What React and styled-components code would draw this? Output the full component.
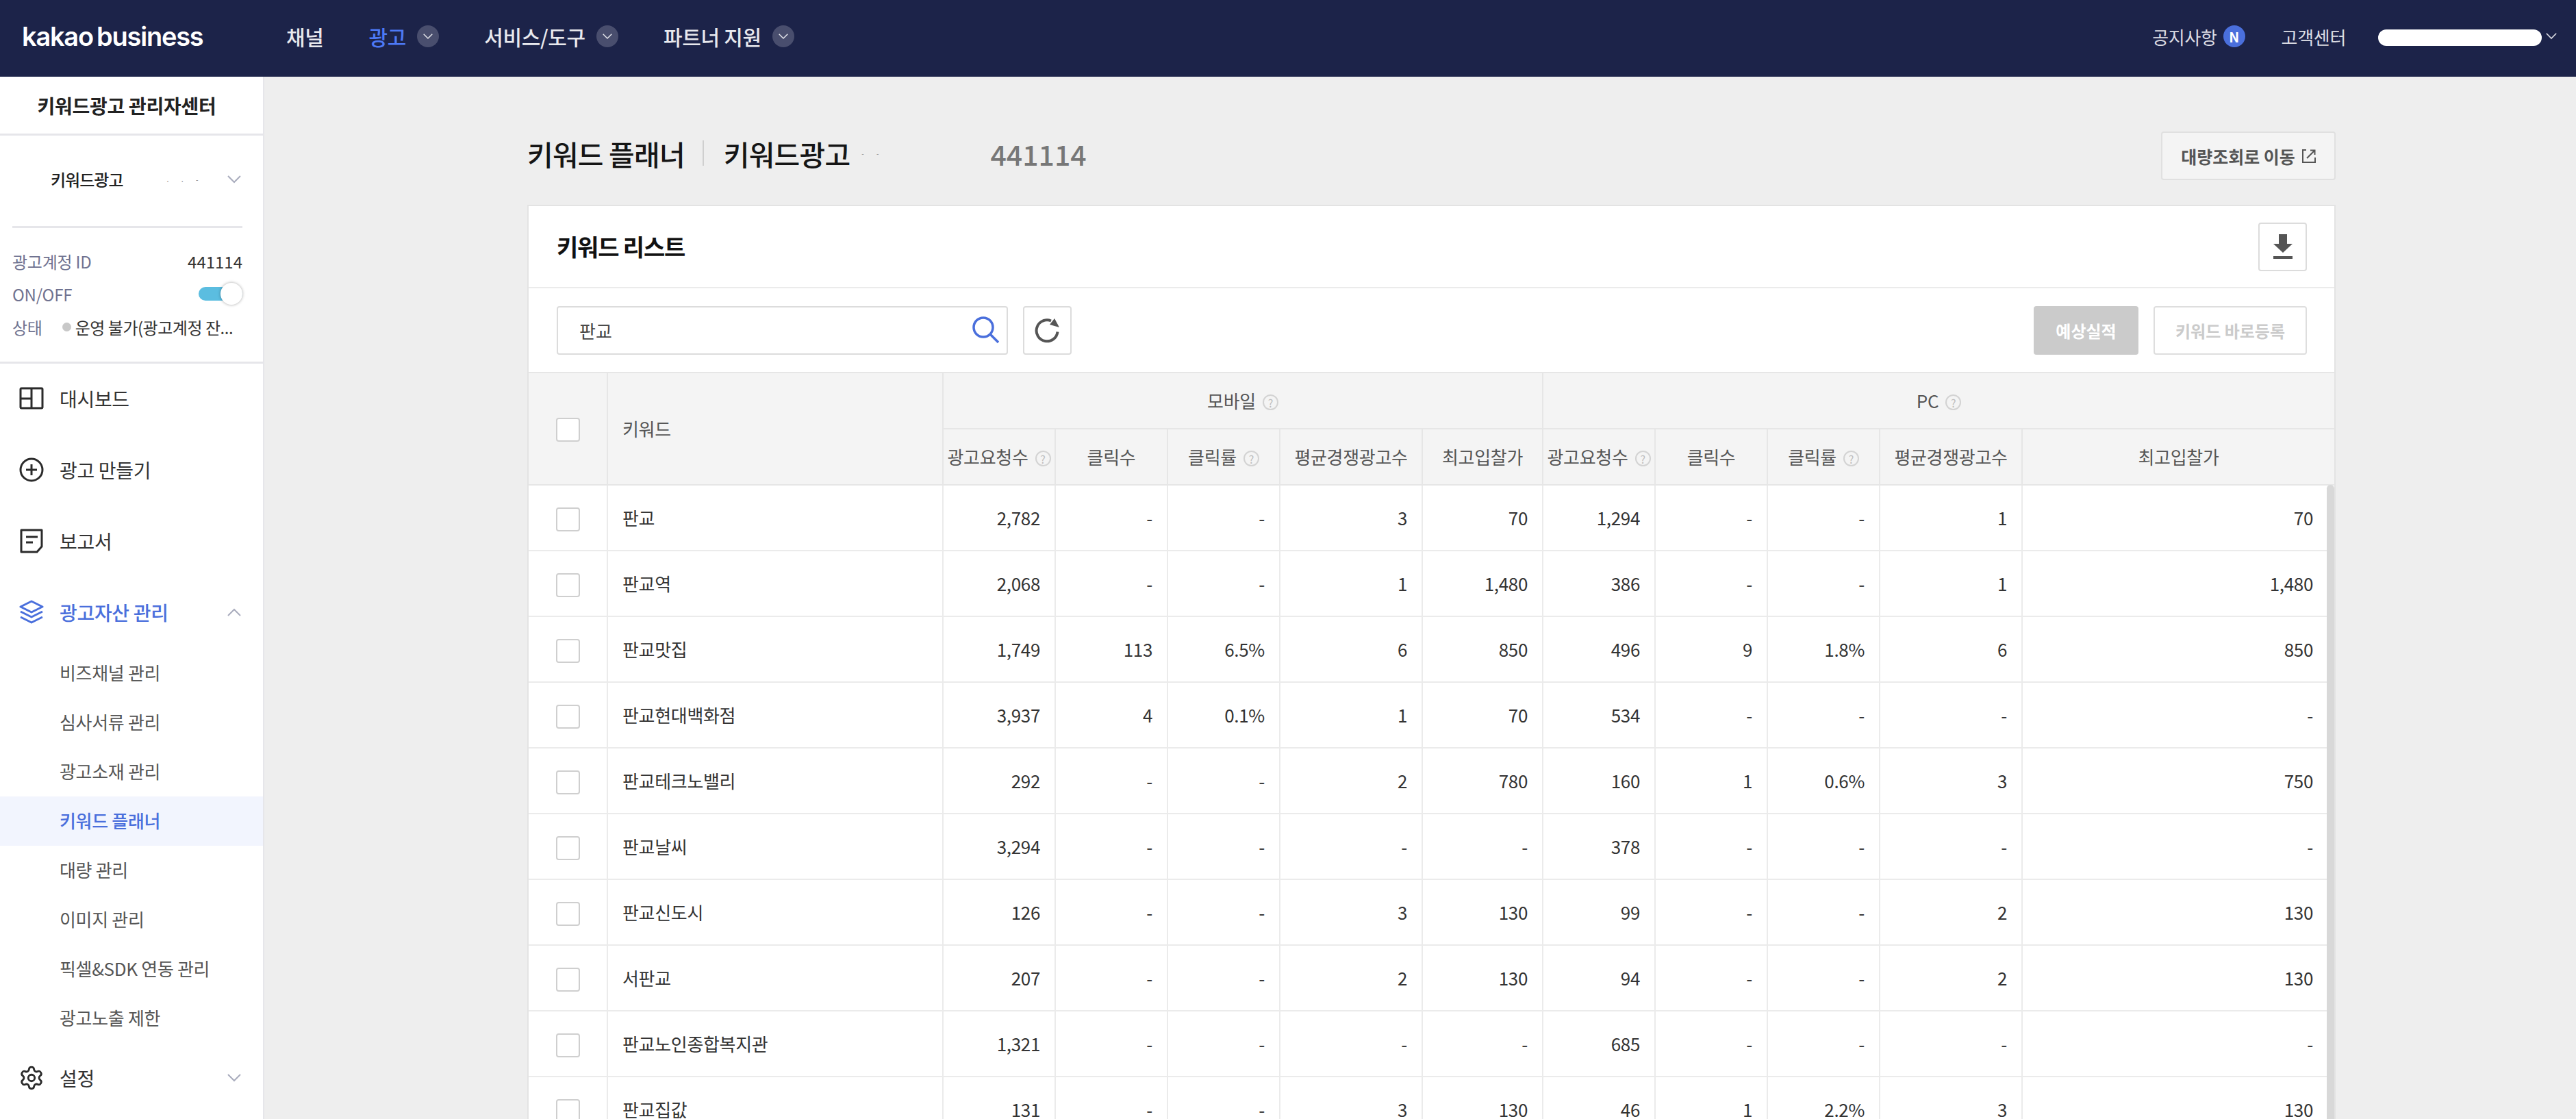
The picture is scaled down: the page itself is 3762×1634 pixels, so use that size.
import React from "react";
import styled, { createGlobalStyle } from "styled-components";
import { Settings } from "lucide-react";

const GlobalStyle = createGlobalStyle`
  * { box-sizing: border-box; }
  html, body { margin: 0; padding: 0; height: 100%; overflow: hidden; }
  body {
    background: #eeeeee;
    color: #333;
    font-family: "Noto Sans CJK KR", "Noto Sans", sans-serif;
    letter-spacing: -0.02em;
  }
`;

const Page = styled.div`
  width: 3762px;
  height: 1634px;
  display: flex;
  flex-direction: column;
  overflow: hidden;
`;

/* top bar */
const TopBar = styled.header`
  flex: none;
  height: 112px;
  background: #1c2349;
  display: flex;
  align-items: center;
  padding: 0 28px 6px 32px;
  color: #fff;
`;
const Logo = styled.div`
  width: 386px;
  font-family: Inter, sans-serif;
  font-size: 38px;
  font-weight: 600;
  letter-spacing: -1.25px;
  word-spacing: -3px;
`;
const TopMenu = styled.nav`
  display: flex;
  align-items: center;
  flex: 1;
`;
const TopLink = styled.span`
  display: flex;
  align-items: center;
  gap: 16px;
  margin-right: ${(p) => p.$gap}px;
  font-size: 30px;
  font-weight: 500;
  color: ${(p) => (p.$active ? "#4d79f6" : "#e8e9ee")};
`;
const ChevBadge = styled.span`
  width: 32px;
  height: 32px;
  border-radius: 50%;
  background: #494e6e;
  display: inline-flex;
  align-items: center;
  justify-content: center;
`;
const TopRight = styled.div`
  display: flex;
  align-items: center;
  font-size: 26px;
  color: #dcdde4;
`;
const NewDot = styled.span`
  width: 32px;
  height: 32px;
  margin: 0 53px 0 9px;
  border-radius: 50%;
  background: #4a6fdc;
  color: #fff;
  font-size: 20px;
  font-weight: 700;
  display: inline-flex;
  align-items: center;
  justify-content: center;
`;
const UserMask = styled.span`
  width: 239px;
  height: 24px;
  margin: 4px 6px 0 47px;
  border-radius: 12px;
  background: #fff;
`;

const Body = styled.div`
  flex: 1;
  display: flex;
  min-height: 0;
`;

/* sidebar */
const Sidebar = styled.aside`
  flex: none;
  width: 386px;
  background: #fff;
  border-right: 2px solid #e6e6ea;
`;
const SideTitle = styled.div`
  height: 86px;
  padding-right: 14px;
  border-bottom: 3px solid #e6e6ea;
  display: flex;
  align-items: center;
  justify-content: center;
  font-size: 28px;
  font-weight: 700;
  color: #222;
  letter-spacing: -0.01em;
`;
const AccountRow = styled.div`
  height: 135px;
  margin: 0 30px 0 18px;
  padding: 0 2px 5px 56px;
  border-bottom: 3px solid #e6e6ea;
  display: flex;
  align-items: center;
  justify-content: space-between;
  font-size: 24px;
  font-weight: 500;
  color: #222;
  letter-spacing: -0.04em;
`;
const Specks = styled.span`
  font-size: 10px;
  color: #888;
  letter-spacing: 8px;
  margin-left: ${(p) => p.$left}px;
  margin-right: auto;
`;
const InfoBlock = styled.div`
  height: 198px;
  padding: 24px 30px 0 18px;
  border-bottom: 3px solid #e6e6ea;
`;
const InfoRow = styled.div`
  height: 48px;
  display: flex;
  align-items: center;
  justify-content: space-between;
  font-size: 24px;
`;
const InfoLabel = styled.span`
  color: #6f7290;
  letter-spacing: -0.01em;
`;
const InfoValue = styled.span`
  color: #333;
  letter-spacing: 0;
`;
const Toggle = styled.span`
  position: relative;
  width: 64px;
  height: 20px;
  border-radius: 10px;
  background: #5bbde0;
`;
const Knob = styled.span`
  position: absolute;
  right: 0;
  top: -6px;
  width: 32px;
  height: 32px;
  border-radius: 50%;
  background: #fff;
  box-shadow: 0 0 4px rgba(0, 0, 0, 0.35);
`;
const StateText = styled.span`
  display: flex;
  align-items: center;
  gap: 6px;
  margin-left: 29px;
  flex: 1;
  color: #333;
  white-space: nowrap;
  letter-spacing: -0.02em;
`;
const StateDot = styled.span`
  width: 13px;
  height: 13px;
  border-radius: 50%;
  background: #c8c8c8;
`;
const MainItem = styled.div`
  height: 104px;
  padding: 0 32px 2px 28px;
  display: flex;
  align-items: center;
  gap: 23px;
  font-size: 28px;
  font-weight: ${(p) => (p.$active ? 500 : 400)};
  color: ${(p) => (p.$active ? "#4a6fdc" : "#333")};
`;
const ItemLabel = styled.span`
  flex: 1;
`;
const SubItem = styled.div`
  height: 72px;
  padding: 0 0 4px 87px;
  display: flex;
  align-items: center;
  font-size: 26px;
  font-weight: ${(p) => (p.$active ? 500 : 400)};
  color: ${(p) => (p.$active ? "#4a6fdc" : "#555")};
  background: ${(p) => (p.$active ? "#f2f5fe" : "transparent")};
`;

/* main column */
const Main = styled.main`
  flex: 1;
  min-width: 0;
  padding: 80px 351px 0 384px;
`;
const TitleRow = styled.div`
  height: 71px;
  margin-bottom: 36px;
  display: flex;
  align-items: center;
  justify-content: space-between;
`;
const Titles = styled.div`
  display: flex;
  align-items: center;
  margin-top: -8px;
`;
const PageTitle = styled.h1`
  margin: 0;
  font-size: 41px;
  font-weight: 500;
  color: #151515;
  letter-spacing: -0.02em;
`;
const TitleSep = styled.span`
  width: 2px;
  height: 37px;
  margin: 0 29px 0 26px;
  background: #cfcfcf;
`;
const AccountNo = styled.span`
  margin-left: 155px;
  font-size: 41px;
  font-weight: 500;
  color: #777;
  letter-spacing: 0;
`;
const BulkButton = styled.button`
  width: 255px;
  height: 71px;
  border: 2px solid #e0e0e0;
  border-radius: 4px;
  background: #f4f4f4;
  color: #555;
  font: inherit;
  font-size: 25px;
  font-weight: 700;
  display: flex;
  align-items: center;
  justify-content: center;
  gap: 10px;
`;
const Card = styled.section`
  background: #fff;
  border: 2px solid #e3e3e3;
  border-bottom: none;
`;
const CardHead = styled.div`
  height: 120px;
  padding: 0 40px 0 41px;
  border-bottom: 2px solid #ebebeb;
  display: flex;
  align-items: center;
  justify-content: space-between;
`;
const CardTitle = styled.h2`
  margin: -2px 0 0;
  font-size: 34px;
  font-weight: 700;
  color: #111;
  letter-spacing: -0.035em;
`;
const IconButton = styled.button`
  width: 71px;
  height: 71px;
  padding: 0;
  border: 2px solid #dcdcdc;
  border-radius: 4px;
  background: #fff;
  display: inline-flex;
  align-items: center;
  justify-content: center;
`;
const Toolbar = styled.div`
  height: 122px;
  padding: 0 40px 0 41px;
  display: flex;
  align-items: center;
  gap: 22px;
`;
const SearchBox = styled.div`
  width: 659px;
  height: 71px;
  padding: 0 11px 0 31px;
  border: 2px solid #dcdcdc;
  border-radius: 4px;
  display: flex;
  align-items: center;
`;
const SearchInput = styled.input`
  flex: 1;
  min-width: 0;
  border: none;
  outline: none;
  padding: 0;
  font: inherit;
  font-size: 26px;
  color: #444;
`;
const PrimaryDisabled = styled.button`
  width: 153px;
  height: 71px;
  margin-left: auto;
  border: none;
  border-radius: 4px;
  background: #cbcbcb;
  color: #fff;
  font: inherit;
  font-size: 24px;
  font-weight: 700;
`;
const GhostDisabled = styled.button`
  width: 224px;
  height: 71px;
  border: 2px solid #dedede;
  border-radius: 4px;
  background: #fff;
  color: #cbcbcb;
  font: inherit;
  font-size: 24px;
  font-weight: 700;
`;

/* table */
const TableWrap = styled.div`
  position: relative;
`;
const Table = styled.table`
  width: 2637px;
  table-layout: fixed;
  border-collapse: collapse;
  font-size: 26px;
`;
const Th = styled.th`
  height: 82px;
  padding: 0 0 2px ${(p) => (p.$left ? "21px" : "0")};
  border: 2px solid #e6e6e6;
  background: #f4f4f4;
  font-weight: 400;
  color: #555;
  white-space: nowrap;
  text-align: ${(p) => (p.$left ? "left" : "center")};
  &:first-child { border-left: none; }
  &:last-child { border-right: none; }
`;
const Td = styled.td`
  height: 96px;
  padding: 0 ${(p) => (p.$last ? 31 : 21)}px 2px 21px;
  border: 2px solid #ebebeb;
  color: #333;
  text-align: ${(p) => (p.$left ? "left" : "right")};
  &:first-child { border-left: none; padding: 0; text-align: center; }
  &:last-child { border-right: none; }
`;
const HelpMark = styled.span`
  display: inline-flex;
  align-items: center;
  justify-content: center;
  width: 23px;
  height: 23px;
  margin-left: 10px;
  border: 2px solid #d3d3d3;
  border-radius: 50%;
  color: #bdbdbd;
  font-size: 16px;
  vertical-align: 1px;
`;
const Check = styled.span`
  display: inline-block;
  width: 35px;
  height: 35px;
  border: 2px solid #cfcfcf;
  border-radius: 4px;
  background: #fff;
  vertical-align: middle;
`;
const ScrollThumb = styled.div`
  position: absolute;
  top: 165px;
  right: 0;
  bottom: 0;
  width: 11px;
  background: #d8d8d8;
  border-radius: 6px 6px 0 0;
`;

const Chevron = ({ up, size = 20, color = "#a9acbd", sw = 2 }) => (
  <svg width={size} height={size * 0.6} viewBox="0 0 20 12" fill="none">
    <path d={up ? "M1 11 10 2l9 9" : "M1 1l9 9 9-9"} stroke={color} strokeWidth={sw} />
  </svg>
);

const DashIcon = () => (
  <svg width="36" height="36" viewBox="0 0 36 36" fill="none" stroke="#2b2b2b" strokeWidth="3">
    <rect x="2" y="3" width="32" height="29" rx="1.5" />
    <path d="M18 3v29M2 18h16" />
  </svg>
);
const PlusIcon = () => (
  <svg width="36" height="36" viewBox="0 0 36 36" fill="none" stroke="#2b2b2b" strokeWidth="3">
    <circle cx="18" cy="18" r="16" />
    <path d="M18 10v16M10 18h16" />
  </svg>
);
const ReportIcon = () => (
  <svg width="36" height="36" viewBox="0 0 36 36" fill="none" stroke="#2b2b2b" strokeWidth="3">
    <path d="M3 2h30v24l-7 8H3z" strokeLinejoin="round" />
    <path d="M10 12h17M10 20h10" />
  </svg>
);
const LayersIcon = () => (
  <svg width="36" height="36" viewBox="0 0 36 36" fill="none" stroke="#4a6fdc" strokeWidth="3" strokeLinejoin="round">
    <path d="M18 2 34 10 18 18 2 10z" />
    <path d="M2 17l16 8 16-8M2 25l16 8 16-8" />
  </svg>
);
const SearchIcon = () => (
  <svg width="40" height="42" viewBox="0 0 40 42" fill="none" stroke="#4a6fdc" strokeWidth="3.5">
    <circle cx="17" cy="17" r="14" />
    <path d="M27 27l12 12" />
  </svg>
);
const RefreshIcon = () => (
  <svg width="40" height="40" viewBox="0 0 40 40" fill="none">
    <path d="M25 6.500A15.500 15.500 0 1 0 34.500 22.500" stroke="#555" strokeWidth="4" />
    <path d="M30 3l7 13-14-4z" fill="#555" />
  </svg>
);
const DownloadIcon = () => (
  <svg width="28" height="36" viewBox="0 0 28 36" fill="#555">
    <path d="M8 0h12v14h8L14 27 0 14h8z" />
    <rect y="32" width="28" height="4" />
  </svg>
);
const ExternalIcon = () => (
  <svg width="20" height="20" viewBox="0 0 20 20" fill="none" stroke="#555" strokeWidth="2">
    <path d="M6 1H1v18h18v-7" />
    <path d="M7 13 18 2M12 1.500h6.500V8" />
  </svg>
);

const subMenu = ["비즈채널 관리", "심사서류 관리", "광고소재 관리", "키워드 플래너", "대량 관리", "이미지 관리", "픽셀&SDK 연동 관리", "광고노출 제한"];

const heads = [
  ["광고요청수", true],
  ["클릭수", false],
  ["클릭률", true],
  ["평균경쟁광고수", false],
  ["최고입찰가", false],
];

const rows = [
  ["판교", "2,782", "-", "-", "3", "70", "1,294", "-", "-", "1", "70"],
  ["판교역", "2,068", "-", "-", "1", "1,480", "386", "-", "-", "1", "1,480"],
  ["판교맛집", "1,749", "113", "6.5%", "6", "850", "496", "9", "1.8%", "6", "850"],
  ["판교현대백화점", "3,937", "4", "0.1%", "1", "70", "534", "-", "-", "-", "-"],
  ["판교테크노밸리", "292", "-", "-", "2", "780", "160", "1", "0.6%", "3", "750"],
  ["판교날씨", "3,294", "-", "-", "-", "-", "378", "-", "-", "-", "-"],
  ["판교신도시", "126", "-", "-", "3", "130", "99", "-", "-", "2", "130"],
  ["서판교", "207", "-", "-", "2", "130", "94", "-", "-", "2", "130"],
  ["판교노인종합복지관", "1,321", "-", "-", "-", "-", "685", "-", "-", "-", "-"],
  ["판교집값", "131", "-", "-", "3", "130", "46", "1", "2.2%", "3", "130"],
];

const colWidths = [115, 490, 164, 164, 164, 208, 176, 164, 164, 164, 208, 456];

const App = () => {
  return (
    <Page>
      <GlobalStyle />
      <TopBar>
        <Logo>kakao business</Logo>
        <TopMenu>
          <TopLink $gap={66}>채널</TopLink>
          <TopLink $active $gap={66}>
            광고
            <ChevBadge><Chevron size={14} color="#e8e9ee" /></ChevBadge>
          </TopLink>
          <TopLink $gap={66}>
            서비스/도구
            <ChevBadge><Chevron size={14} color="#e8e9ee" /></ChevBadge>
          </TopLink>
          <TopLink $gap={0}>
            파트너 지원
            <ChevBadge><Chevron size={14} color="#e8e9ee" /></ChevBadge>
          </TopLink>
        </TopMenu>
        <TopRight>
          공지사항
          <NewDot>N</NewDot>
          고객센터
          <UserMask />
          <Chevron size={16} color="#dcdde4" />
        </TopRight>
      </TopBar>
      <Body>
        <Sidebar>
          <SideTitle>키워드광고 관리자센터</SideTitle>
          <AccountRow>
            키워드광고
            <Specks $left={64}>. . -</Specks>
            <Chevron color="#a9acbd" />
          </AccountRow>
          <InfoBlock>
            <InfoRow>
              <InfoLabel>광고계정 ID</InfoLabel>
              <InfoValue>441114</InfoValue>
            </InfoRow>
            <InfoRow>
              <InfoLabel>ON/OFF</InfoLabel>
              <Toggle><Knob /></Toggle>
            </InfoRow>
            <InfoRow>
              <InfoLabel>상태</InfoLabel>
              <StateText><StateDot />운영 불가(광고계정 잔...</StateText>
            </InfoRow>
          </InfoBlock>
          <MainItem><DashIcon /><ItemLabel>대시보드</ItemLabel></MainItem>
          <MainItem><PlusIcon /><ItemLabel>광고 만들기</ItemLabel></MainItem>
          <MainItem><ReportIcon /><ItemLabel>보고서</ItemLabel></MainItem>
          <MainItem $active>
            <LayersIcon /><ItemLabel>광고자산 관리</ItemLabel><Chevron up />
          </MainItem>
          {subMenu.map((s) => (
            <SubItem key={s} $active={s === "키워드 플래너"}>{s}</SubItem>
          ))}
          <MainItem>
            <Settings size={38} strokeWidth={1.8} color="#2b2b2b" style={{ margin: "0 -1px" }} />
            <ItemLabel>설정</ItemLabel><Chevron />
          </MainItem>
        </Sidebar>
        <Main>
          <TitleRow>
            <Titles>
              <PageTitle>키워드 플래너</PageTitle>
              <TitleSep />
              <PageTitle>키워드광고</PageTitle>
              <Specks $left={17}>- -</Specks>
              <AccountNo>441114</AccountNo>
            </Titles>
            <BulkButton>대량조회로 이동 <ExternalIcon /></BulkButton>
          </TitleRow>
          <Card>
            <CardHead>
              <CardTitle>키워드 리스트</CardTitle>
              <IconButton><DownloadIcon /></IconButton>
            </CardHead>
            <Toolbar>
              <SearchBox>
                <SearchInput defaultValue="판교" readOnly />
                <SearchIcon />
              </SearchBox>
              <IconButton><RefreshIcon /></IconButton>
              <PrimaryDisabled>예상실적</PrimaryDisabled>
              <GhostDisabled>키워드 바로등록</GhostDisabled>
            </Toolbar>
            <TableWrap>
              <Table>
                <colgroup>
                  {colWidths.map((w, i) => <col key={i} width={w} />)}
                </colgroup>
                <thead>
                  <tr>
                    <Th rowSpan={2}><Check /></Th>
                    <Th rowSpan={2} $left>키워드</Th>
                    <Th colSpan={5}>모바일<HelpMark>?</HelpMark></Th>
                    <Th colSpan={5}>PC<HelpMark>?</HelpMark></Th>
                  </tr>
                  <tr>
                    {[...heads, ...heads].map(([label, help], i) => (
                      <Th key={i}>{label}{help && <HelpMark>?</HelpMark>}</Th>
                    ))}
                  </tr>
                </thead>
                <tbody>
                  {rows.map((row) => (
                    <tr key={row[0]}>
                      <Td><Check /></Td>
                      {row.map((v, i) => (
                        <Td key={i} $left={i === 0} $last={i === row.length - 1}>{v}</Td>
                      ))}
                    </tr>
                  ))}
                </tbody>
              </Table>
              <ScrollThumb />
            </TableWrap>
          </Card>
        </Main>
      </Body>
    </Page>
  );
};

export default App;
